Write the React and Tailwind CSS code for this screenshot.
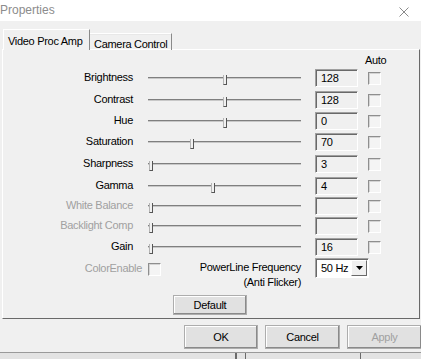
import React from 'react';

const rows = [
  { label: 'Brightness', value: '128', thumb: 75, h: 'h-[22px]' },
  { label: 'Contrast', value: '128', thumb: 75, h: 'h-[21px]' },
  { label: 'Hue', value: '0', thumb: 75, h: 'h-[21px]' },
  { label: 'Saturation', value: '70', thumb: 42, h: 'h-[22px]' },
  { label: 'Sharpness', value: '3', thumb: 1, h: 'h-[22px]' },
  { label: 'Gamma', value: '4', thumb: 63, h: 'h-[20px]' },
  { label: 'White Balance', value: '', thumb: 1, h: 'h-[20px]', disabled: true },
  { label: 'Backlight Comp', value: '', thumb: 1, h: 'h-[21px]', disabled: true },
  { label: 'Gain', value: '16', thumb: 1, h: 'h-[20px]' },
];

const CheckBox = () => (
  <div className="w-[13px] h-[13px] border border-t-[#8e8e8e] border-l-[#8e8e8e] border-b-white border-r-white bg-[#f4f4f4] shadow-[inset_1px_1px_0_#d4d4d4]" />
);

const Slider = ({ thumb }) => (
  <div className="relative w-[153px] h-[18px] flex items-center">
    <div className="w-full h-[2px] bg-[#7f7f7f] border-b border-b-[#c8c8c8]" />
    {/* thumb offset comes from the row data */}
    <div
      className="absolute top-[6px] w-[4px] h-[10px] bg-[#f0f0f0] border-l border-l-[#b5b5b5] border-r border-r-[#555] border-b border-b-[#555]"
      style={{ left: thumb }}
    />
  </div>
);

const Button = ({ children, disabled, className = '' }) => (
  <div
    className={`flex items-center justify-center border border-[#adadad] bg-[#e1e1e1] shadow-[inset_-1px_-1px_0_#8a8a8a,inset_1px_1px_0_#fff] ${disabled ? 'text-[#a0a0a0]' : 'text-black'} ${className}`}
  >
    {children}
  </div>
);

export default function App() {
  return (
    <div className="w-[421px] h-[359px] overflow-hidden bg-[#f0f0f0] font-['Liberation_Sans',Arial,sans-serif] text-[11px] tracking-[-0.3px] text-black select-none">
      {/* title bar */}
      <div className="h-[21px] bg-white flex items-center justify-between">
        <span className="ml-0 mt-[-2px] text-[12px] tracking-normal text-[#8c8c8c]">Properties</span>
        <svg className="mr-[12px] mt-[3px]" width="10" height="10" viewBox="0 0 10 10">
          <path d="M0.5 0.5 L9.5 9.5 M9.5 0.5 L0.5 9.5" stroke="#8a8a8a" strokeWidth="1" fill="none" />
        </svg>
      </div>

      {/* tabs */}
      <div className="mt-[8px] h-[21px] -mb-[1px] pl-[3px] flex items-end">
        <div className="relative z-10 h-[21px] w-[87px] bg-[#f0f0f0] border-t border-l border-t-white border-l-white border-r border-r-[#8a8a8a] flex items-start pt-[3px] pl-[4px]">
          Video Proc Amp
        </div>
        <div className="h-[17px] w-[82px] border-t border-t-white border-r border-r-[#8a8a8a] shadow-[inset_0_1px_0_#e8e8e8] flex items-start pt-[2px] pl-[4px]">
          Camera Control
        </div>
      </div>

      {/* panel */}
      <div className="ml-[2px] w-[418px] h-[270px] border border-t-white border-l-white border-r-[#696969] border-b-[#696969] flex flex-col">
        <div className="h-[19px] flex items-center pl-[362px] pt-[1px]">Auto</div>
        {rows.map((r) => (
          <div key={r.label} className={`${r.h} flex items-start`}>
            <div className="h-[18px] flex items-center">
              <div className={`w-[130px] text-right mt-[-2px] ${r.disabled ? 'text-[#a0a0a0]' : 'text-black'}`}>{r.label}</div>
              <div className="ml-[15px]">
                <Slider thumb={r.thumb} />
              </div>
              <div className="ml-[14px] w-[43px] h-[18px] border border-t-[#a0a0a0] border-l-[#a0a0a0] border-b-white border-r-white shadow-[inset_1px_1px_0_#696969] bg-[#f0f0f0] flex items-center pl-[5px]">
                {r.value}
              </div>
              <div className="ml-[10px]">
                <CheckBox />
              </div>
            </div>
          </div>
        ))}

        {/* bottom controls */}
        <div className="h-[20px] flex items-start">
          <div className="w-[139px] h-[20px] flex items-center justify-end text-[#a0a0a0]">ColorEnable</div>
          <div className="ml-[6px] mt-[5px]">
            <CheckBox />
          </div>
          <div className="w-[140px] mt-[2px] leading-[15px] text-right">
            <div>PowerLine Frequency</div>
            <div>(Anti Flicker)</div>
          </div>
          <div className="ml-[14px] w-[54px] h-[20px] bg-white border border-t-[#a0a0a0] border-l-[#a0a0a0] border-b-white border-r-white shadow-[inset_1px_1px_0_#696969] flex items-center">
            <span className="pl-[5px] flex-1">50 Hz</span>
            <div className="w-[16px] h-[16px] mr-[1px] bg-[#f0f0f0] border border-t-white border-l-white border-b-[#696969] border-r-[#696969] flex items-center justify-center">
              <svg width="7" height="4" viewBox="0 0 7 4">
                <path d="M0 0 H7 L3.5 4 Z" fill="#000" />
              </svg>
            </div>
          </div>
        </div>

        <div className="mt-[17px] ml-[170px]">
          <Button className="w-[74px] h-[20px]">Default</Button>
        </div>
      </div>

      {/* dialog buttons */}
      <div className="mt-[6px] pl-[184px] flex gap-[7px]">
        <Button className="w-[74px] h-[24px] shrink-0">OK</Button>
        <Button className="w-[75px] h-[24px] shrink-0">Cancel</Button>
        <Button className="w-[75px] h-[24px] shrink-0" disabled>Apply</Button>
      </div>

      {/* window behind */}
      <div className="mt-[3px] h-[10px] border-t border-t-[#9a9a9a] bg-[#e3e3e3] flex">
        <div className="ml-[235px] w-[2px] h-full bg-[#6a6a6a]" />
        <div className="ml-[8px] w-[1px] h-full bg-[#6a6a6a]" />
        <div className="ml-[114px] w-[1px] h-full bg-[#6a6a6a]" />
      </div>
    </div>
  );
}
